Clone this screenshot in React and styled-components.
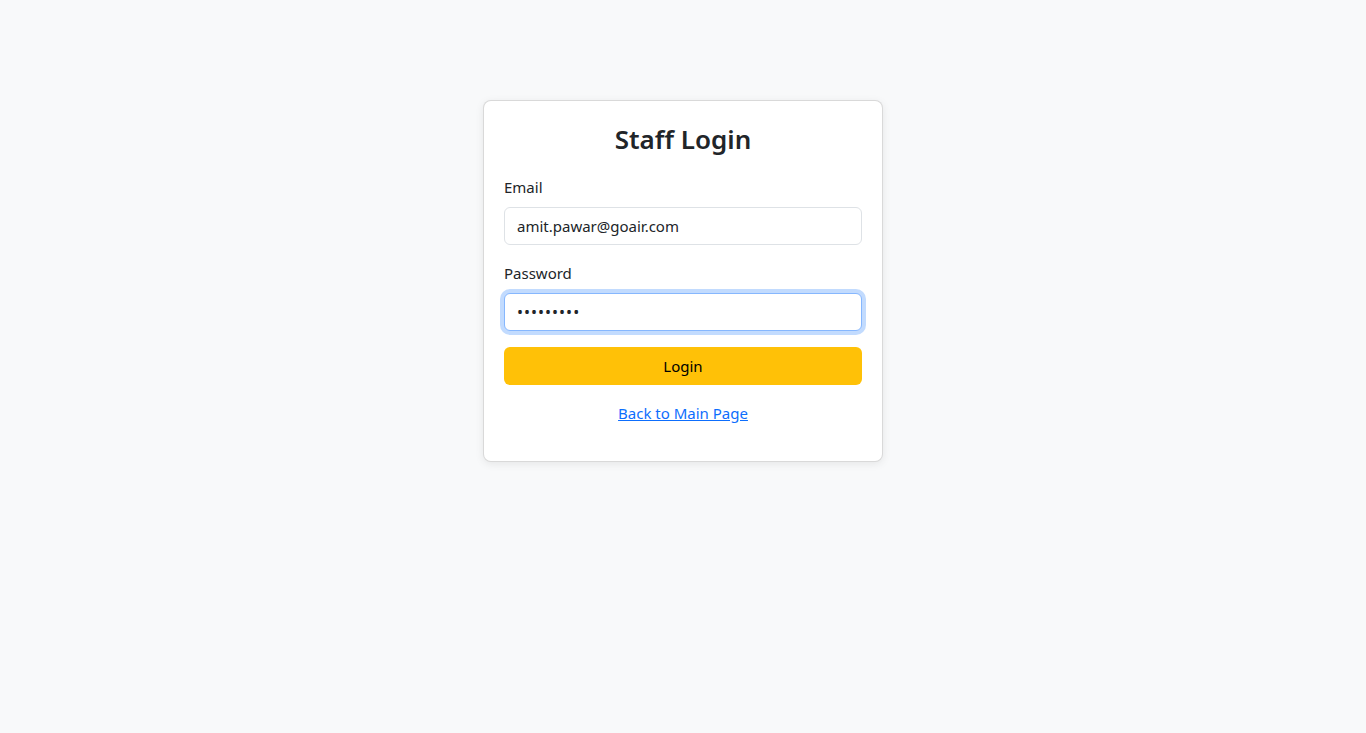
import React from "react";
import styled, { createGlobalStyle, css } from "styled-components";

const GlobalStyle = createGlobalStyle`
  * { box-sizing: border-box; }
  body {
    margin: 0;
    background: #f8f9fa;
    color: #212529;
    font-family: "Noto Sans", "Open Sans", Arial, sans-serif;
    font-size: 16px;
    line-height: 1.5;
  }
`;

const App = () => {
  return (
    <>
      <GlobalStyle />
      <StyledPage>
        <StyledCard>
          <StyledTitle>Staff Login</StyledTitle>
          <StyledField>
            <StyledLabel htmlFor="email">Email</StyledLabel>
            <StyledInput
              id="email"
              type="email"
              defaultValue="amit.pawar@goair.com"
            />
          </StyledField>
          <StyledField>
            <StyledLabel htmlFor="password">Password</StyledLabel>
            <StyledInput
              id="password"
              type="password"
              defaultValue="123456789"
              $focused
              $secret
            />
          </StyledField>
          <StyledButton type="button">Login</StyledButton>
          <StyledFooter>
            <a href="#">Back to Main Page</a>
          </StyledFooter>
        </StyledCard>
      </StyledPage>
    </>
  );
};

//styled components
const StyledPage = styled.div`
  min-height: 733px;
  display: flex;
  justify-content: center;
  align-items: flex-start;
  padding-top: 100px;
`;
const StyledCard = styled.div`
  width: 400px;
  background: #fff;
  border: 1px solid rgba(0, 0, 0, 0.15);
  border-radius: 8px;
  padding: 20px 20px 36px;
  box-shadow: 0 2px 8px rgba(0, 0, 0, 0.08);
  display: flex;
  flex-direction: column;
`;
const StyledTitle = styled.h3`
  margin: 0 0 18px;
  text-align: center;
  font-size: 26px;
  font-weight: 600;
  line-height: 36px;
  color: #212529;
`;
const StyledField = styled.div`
  display: flex;
  flex-direction: column;
  margin-bottom: 16px;
`;
const StyledLabel = styled.label`
  font-size: 15px;
  line-height: 24px;
  margin-bottom: 8px;
  color: #212529;
`;
const StyledInput = styled.input`
  height: 38px;
  width: 100%;
  padding: 6px 12px;
  font-family: inherit;
  font-size: 15px;
  color: #212529;
  background: #fff;
  border: 1px solid #dee2e6;
  border-radius: 6px;
  outline: none;
  ${(p) =>
    p.$secret &&
    css`
      font-size: 16px;
      letter-spacing: 1px;
    `}
  ${(p) =>
    p.$focused &&
    css`
      border-color: #86b7fe;
      box-shadow: 0 0 0 4px rgba(13, 110, 253, 0.25);
    `}
  &:focus {
    border-color: #86b7fe;
    box-shadow: 0 0 0 4px rgba(13, 110, 253, 0.25);
  }
`;
const StyledButton = styled.button`
  height: 38px;
  width: 100%;
  border: none;
  border-radius: 6px;
  background: #ffc107;
  color: #000;
  font-family: inherit;
  font-size: 15px;
  cursor: pointer;
`;
const StyledFooter = styled.div`
  margin-top: 16px;
  text-align: center;
  line-height: 24px;
  a {
    color: #0d6efd;
    font-size: 15px;
    text-decoration: underline;
  }
`;

export default App;
